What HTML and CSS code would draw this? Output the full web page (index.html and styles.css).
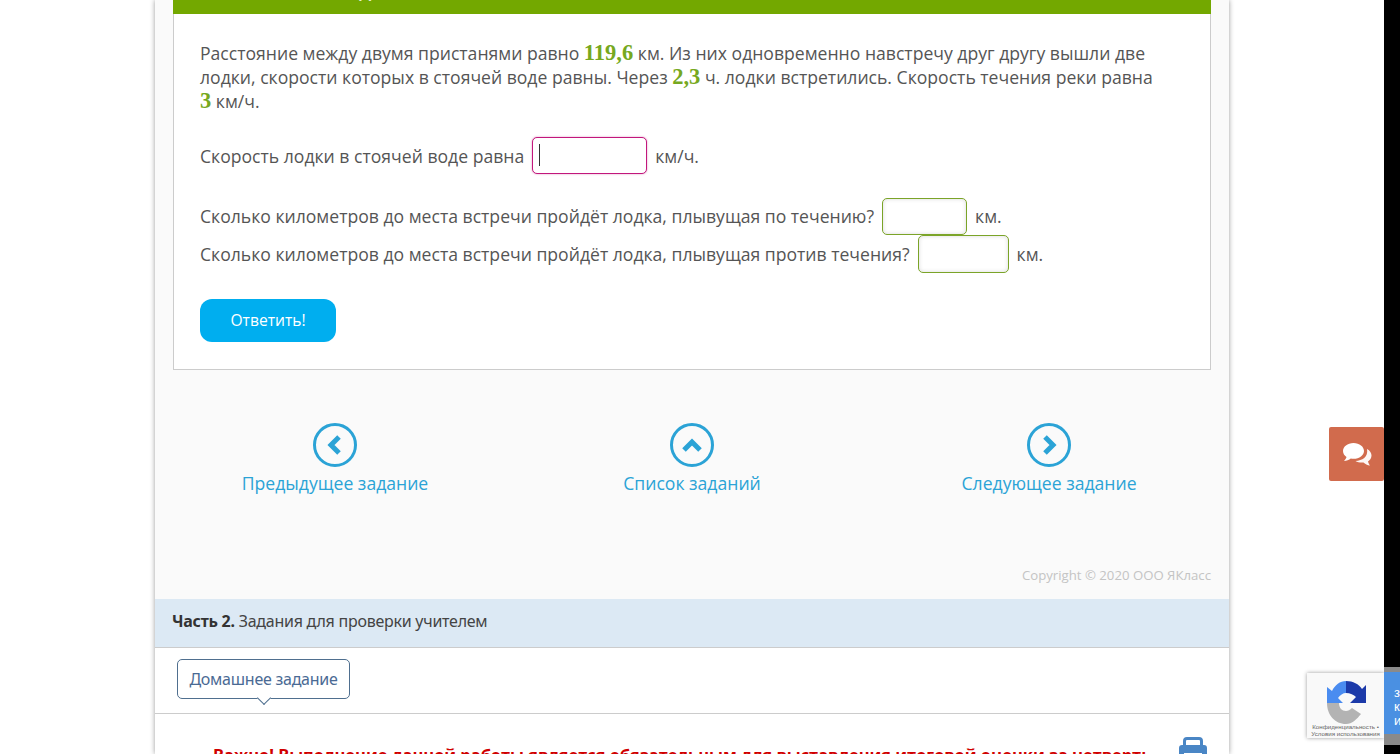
FILE: index.html
```html
<!DOCTYPE html>
<html lang="ru">
<head>
<meta charset="utf-8">
<title>Задание</title>
<link rel="stylesheet" href="styles.css">
</head>
<body>
<div class="viewport">
  <main class="page">
    <section class="card">
      <div class="card-head"><span class="card-title">д</span></div>
      <div class="card-body">
        <p class="problem">Расстояние между двумя пристанями равно <b class="num">119,6</b> км. Из них одновременно навстречу друг другу вышли две лодки, скорости которых в стоячей воде равны. Через <b class="num">2,3</b> ч. лодки встретились. Скорость течения реки равна <b class="num">3</b> км/ч.</p>
        <div class="row row-first">
          <span>Скорость лодки в стоячей воде равна</span>
          <span class="field-wrap"><input class="field field-active" type="text" aria-label="Скорость"><span class="caret"></span></span>
          <span>км/ч.</span>
        </div>
        <div class="row row-second">
          <span>Сколько километров до места встречи пройдёт лодка, плывущая по течению?</span>
          <input class="field field-s" type="text" aria-label="По течению">
          <span>км.</span>
        </div>
        <div class="row">
          <span>Сколько километров до места встречи пройдёт лодка, плывущая против течения?</span>
          <input class="field field-m" type="text" aria-label="Против течения">
          <span>км.</span>
        </div>
        <button class="submit" type="button">Ответить!</button>
      </div>
    </section>

    <nav class="pager">
      <a class="pager-link" href="#">
        <svg class="pager-icon" viewBox="0 0 44 44"><circle cx="22" cy="22" r="20.5"/><path d="M26 14 18 22l8 8"/></svg>
        <span>Предыдущее задание</span>
      </a>
      <a class="pager-link" href="#">
        <svg class="pager-icon" viewBox="0 0 44 44"><circle cx="22" cy="22" r="20.5"/><path d="M14 27l8-8 8 8"/></svg>
        <span>Список заданий</span>
      </a>
      <a class="pager-link" href="#">
        <svg class="pager-icon" viewBox="0 0 44 44"><circle cx="22" cy="22" r="20.5"/><path d="M18 14l8 8-8 8"/></svg>
        <span>Следующее задание</span>
      </a>
    </nav>

    <div class="copyright">Copyright © 2020 ООО ЯКласс</div>

    <div class="part-band"><b>Часть 2.</b> Задания для проверки учителем</div>

    <div class="tabs">
      <a class="tab" href="#">Домашнее задание</a>
    </div>

    <div class="notice">
      <p class="notice-text">Важно! Выполнение данной работы является обязательным для выставления итоговой оценки за четверть</p>
      <svg class="print-icon" viewBox="0 0 28 26"><path d="M4 8V4a4 4 0 0 1 4-4h12a4 4 0 0 1 4 4v4h-3V4a1 1 0 0 0-1-1H8a1 1 0 0 0-1 1v4z"/><path d="M3 8h22a3 3 0 0 1 3 3v9h-5v-4H5v4H0v-9a3 3 0 0 1 3-3z"/><path d="M7 18h14v8H7z"/></svg>
    </div>
  </main>
  <div class="scrollbar"></div>
</div>

<button class="feedback" type="button" aria-label="Обратная связь">
  <svg viewBox="0 0 30 24" width="30" height="24"><path class="bubble-back" d="M25 7c3 1.500 4.500 4 4.500 6.500 0 2.500-1.500 4.500-3.500 6 .3 1.500 1.300 3 2 4-2.500-.2-5-1.500-6.500-3-3 .3-6-.3-8-1.500 6.500-.3 13-4 11.500-12z"/><path d="M11.500 1C5.500 1 1 4.800 1 9c0 2.500 1.400 4.500 3.500 6-.3 1.500-1.300 2.800-2.500 4 2.500-.2 5-1.200 6.800-2.500 1 .2 1.800.3 2.700.3 6 0 10.500-3.600 10.500-7.800S17.500 1 11.500 1z"/></svg>
</button>

<aside class="recaptcha">
  <div class="rc-badge">
    <svg class="rc-logo" viewBox="0 0 44 44">
      <path class="rc-grey" d="M2 23h12c0 5 3 8 7 8 2 0 4-1 6-3l9 6c-4 5-9 10-15 10C10 44 2 35 2 23z"/>
      <path class="rc-light" d="M21 1v12c-3 0-6 2-8 5l5 5H2V7l5 4C10 5 15 1 21 1z"/>
      <path class="rc-dark" d="M21 1c7 0 13 3 16 8l4-4v18H25l6-6c-2-2-6-4-10-4z"/>
    </svg>
    <div class="rc-links">Конфиденциальность •<br>Условия использования</div>
  </div>
  <div class="rc-side">
    <div class="rc-panel">з<br>к<br>и</div>
  </div>
</aside>
</body>
</html>
```

FILE: styles.css
```css
* { box-sizing: border-box; }
html, body { margin: 0; height: 754px; overflow: hidden; background: #fff; }
body { font-family: "Open Sans", sans-serif; color: #555; font-size: 17.600px; }

.viewport { display: flex; height: 754px; overflow: hidden; }
.scrollbar { width: 16px; flex: none; background: #000; }
.page {
  width: 1074px;
  margin: 0 auto;
  height: 754px;
  background: #fafafa;
  box-shadow: 0 0 5px rgba(0, 0, 0, .4);
  overflow: hidden;
}

.card { margin: 0 18px; background: #fff; border: 1px solid #ccc; border-top: 0; }
.card-head { height: 14px; margin: 0 -1px; background: #73a800; overflow: hidden; position: relative; }
.card-title { position: absolute; left: 186px; top: -22px; color: #fff; font-size: 20px; line-height: 24px; font-weight: 600; }
.card-body { padding: 27px 26px 27px; }

.problem { margin: 0; line-height: 24px; max-width: 960px; }
.num { font-family: "Liberation Serif", serif; font-weight: 700; font-size: 22.500px; line-height: 20px; color: #76a820; }

.row { display: flex; align-items: center; gap: 8px; line-height: 24px; }
.row-first { margin-top: 24px; }
.row-second { margin-top: 24px; }
.row-second > span { margin-bottom: 1px; }

.field-wrap { position: relative; display: block; height: 37px; }
.field {
  display: block;
  width: 85px;
  height: 37px;
  padding: 0;
  background: #fff;
  border: 1px solid #7ba428;
  border-radius: 5px;
  box-shadow: inset 0 0 4px rgba(0, 0, 0, .15);
  outline: 0;
}
.field-active { width: 115px; border-color: #c2177c; box-shadow: 0 0 2px rgba(194, 23, 124, .5); }
.field-s { width: 85px; }
.field-m { width: 91px; height: 38px; }
.caret { position: absolute; left: 7px; top: 7px; width: 1px; height: 22px; background: #333; }

.submit {
  display: block;
  width: 136px;
  height: 43px;
  margin-top: 26px;
  padding: 0 0 2px;
  border: 0;
  border-radius: 12px;
  background: #00aeef;
  color: #fff;
  font: 400 15.600px "Open Sans", sans-serif;
}

.pager { display: grid; grid-template-columns: repeat(3, 1fr); padding: 0 1.500px; margin-top: 53px; }
.pager-link { display: flex; flex-direction: column; align-items: center; gap: 4px; color: #2ba3d6; text-decoration: none; line-height: 24px; }
.pager-icon { display: block; width: 44px; height: 44px; fill: none; stroke: #2ba3d6; }
.pager-icon circle { stroke-width: 3; }
.pager-icon path { stroke-width: 5; }

.copyright { margin: 71px 18px 0; text-align: right; font-size: 13.200px; line-height: 18px; color: #c4c4c4; padding-bottom: 15px; }

.part-band {
  height: 49px;
  padding: 0 17px;
  background: #dce9f4;
  border-bottom: 1px solid #ccc;
  font: 400 16px/44px "Noto Sans", sans-serif;
  letter-spacing: -.25px;
  color: #444;
}
.part-band b { color: #333; }

.tabs { height: 66px; padding: 11px 22px 0; border-bottom: 1px solid #ccc; background: #fff; }
.tab {
  position: relative;
  display: inline-block;
  height: 40px;
  width: 173px;
  text-align: center;
  border: 1px solid #4f6f8f;
  border-radius: 5px;
  background: #fff;
  color: #4a6a94;
  font: 400 16px/38px "Noto Sans", sans-serif;
  letter-spacing: -.25px;
  text-decoration: none;
}
.tab::after {
  content: "";
  position: absolute;
  left: 81px;
  bottom: -5px;
  width: 9px;
  height: 9px;
  background: #fff;
  border-right: 1px solid #4f6f8f;
  border-bottom: 1px solid #4f6f8f;
  transform: rotate(45deg);
}

.notice { position: relative; height: 41px; background: #fff; padding: 29px 0 0 58px; }
.notice-text { margin: 0; font-size: 16.400px; line-height: 24px; font-weight: 700; color: #d00000; white-space: nowrap; }
.print-icon { position: absolute; left: 1024px; top: 23px; width: 28px; height: 26px; fill: #4a86c5; }

.feedback {
  position: absolute;
  left: 1329px;
  top: 427px;
  width: 55px;
  height: 54px;
  padding: 0;
  border: 0;
  border-radius: 2px;
  background: #d16b4d;
  display: flex;
  align-items: center;
  justify-content: center;
}
.feedback svg { fill: #fff; }
.bubble-back { opacity: .95; }

.recaptcha { position: absolute; left: 1307px; top: 667px; width: 93px; height: 78px; }
.rc-badge {
  position: absolute;
  left: 0;
  top: 6px;
  width: 77px;
  height: 65px;
  background: #f9f9f9;
  box-shadow: 0 0 4px rgba(0, 0, 0, .4);
}
.rc-logo { position: absolute; left: 18px; top: 7px; width: 44px; height: 44px; }
.rc-grey { fill: #b3b3b3; }
.rc-light { fill: #4a8cf0; }
.rc-dark { fill: #1c3aa9; }
.rc-links { position: absolute; left: 0; right: 0; top: 50px; text-align: center; font: 6.200px/7px "Liberation Sans", sans-serif; color: #666; white-space: nowrap; }
.rc-side { position: absolute; left: 77px; top: 0; width: 16px; height: 78px; background: #8a8a8a; overflow: hidden; }
.rc-panel {
  height: 62px;
  margin-top: 5px;
  padding: 14px 0 0 10px;
  background: #4a90e2;
  color: #fff;
  font: 400 13px/14px "Liberation Sans", sans-serif;
}
```
